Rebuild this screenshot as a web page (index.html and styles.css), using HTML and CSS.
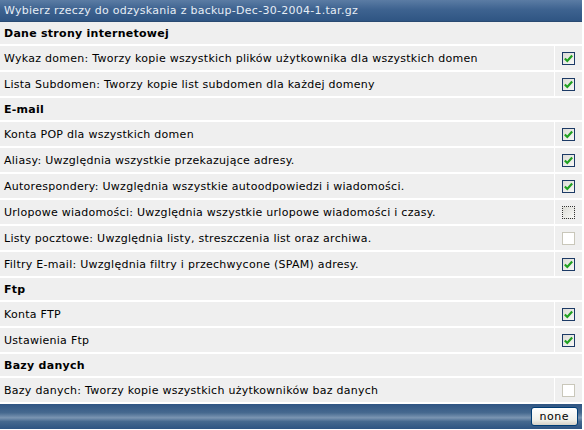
FILE: index.html
```html
<!DOCTYPE html>
<html lang="pl">
<head>
    <meta charset="utf-8">
    <title>Odzyskiwanie kopii</title>
    <link rel="stylesheet" href="styles.css">
</head>
<body>
    <table class="list">
        <tr>
            <td class="title" colspan="2">Wybierz rzeczy do odzyskania z backup-Dec-30-2004-1.tar.gz</td>
        </tr>
        <tr>
            <td class="section" colspan="2">Dane strony internetowej</td>
        </tr>
        <tr>
            <td class="item">Wykaz domen: Tworzy kopie wszystkich plików użytkownika dla wszystkich domen</td>
            <td class="check"><span class="box on"><svg viewBox="0 0 9 9"><path d="M1.5 4.5 L3.5 6.5 L7.5 2" /></svg></span></td>
        </tr>
        <tr>
            <td class="item">Lista Subdomen: Tworzy kopie list subdomen dla każdej domeny</td>
            <td class="check"><span class="box on"><svg viewBox="0 0 9 9"><path d="M1.5 4.5 L3.5 6.5 L7.5 2" /></svg></span></td>
        </tr>
        <tr>
            <td class="section" colspan="2">E-mail</td>
        </tr>
        <tr>
            <td class="item">Konta POP dla wszystkich domen</td>
            <td class="check"><span class="box on"><svg viewBox="0 0 9 9"><path d="M1.5 4.5 L3.5 6.5 L7.5 2" /></svg></span></td>
        </tr>
        <tr>
            <td class="item">Aliasy: Uwzględnia wszystkie przekazujące adresy.</td>
            <td class="check"><span class="box on"><svg viewBox="0 0 9 9"><path d="M1.5 4.5 L3.5 6.5 L7.5 2" /></svg></span></td>
        </tr>
        <tr>
            <td class="item">Autorespondery: Uwzględnia wszystkie autoodpowiedzi i wiadomości.</td>
            <td class="check"><span class="box on"><svg viewBox="0 0 9 9"><path d="M1.5 4.5 L3.5 6.5 L7.5 2" /></svg></span></td>
        </tr>
        <tr>
            <td class="item">Urlopowe wiadomości: Uwzględnia wszystkie urlopowe wiadomości i czasy.</td>
            <td class="check"><span class="box focus"></span></td>
        </tr>
        <tr>
            <td class="item">Listy pocztowe: Uwzględnia listy, streszczenia list oraz archiwa.</td>
            <td class="check"><span class="box off"></span></td>
        </tr>
        <tr>
            <td class="item">Filtry E-mail: Uwzględnia filtry i przechwycone (SPAM) adresy.</td>
            <td class="check"><span class="box on"><svg viewBox="0 0 9 9"><path d="M1.5 4.5 L3.5 6.5 L7.5 2" /></svg></span></td>
        </tr>
        <tr>
            <td class="section" colspan="2">Ftp</td>
        </tr>
        <tr>
            <td class="item">Konta FTP</td>
            <td class="check"><span class="box on"><svg viewBox="0 0 9 9"><path d="M1.5 4.5 L3.5 6.5 L7.5 2" /></svg></span></td>
        </tr>
        <tr>
            <td class="item">Ustawienia Ftp</td>
            <td class="check"><span class="box on"><svg viewBox="0 0 9 9"><path d="M1.5 4.5 L3.5 6.5 L7.5 2" /></svg></span></td>
        </tr>
        <tr>
            <td class="section" colspan="2">Bazy danych</td>
        </tr>
        <tr>
            <td class="item">Bazy danych: Tworzy kopie wszystkich użytkowników baz danych</td>
            <td class="check"><span class="box off"></span></td>
        </tr>
        <tr>
            <td class="footer" colspan="2"><button class="btn">none</button></td>
        </tr>
    </table>
</body>
</html>
```

FILE: styles.css
```css
body {
    margin: 0;
    padding: 0;
    background: #ffffff;
    font-family: "DejaVu Sans", Verdana, sans-serif;
    font-size: 11px;
    color: #000000;
}
.list {
    width: 582px;
    border-collapse: separate;
    border-spacing: 0;
    background: #ffffff;
}
.list td {
    padding: 0 4px;
    background: #efefef;
    border-bottom: 2px solid #ffffff;
    letter-spacing: 0.27px;
}
.title {
    height: 21px;
    color: #e6edf5;
    letter-spacing: 0.3px;
    background: linear-gradient(to bottom, #5b7ca4 0%, #3e6390 45%, #2f5583 100%) !important;
    border-bottom: 1px solid #2a4a72 !important;
}
.section {
    height: 22px;
    font-weight: bold;
}
.item {
    height: 24px;
}
.list td.check {
    width: 20px;
    padding: 0 0 0 7px;
    border-left: 1px solid #ffffff;
}
.box {
    display: block;
    width: 11px;
    height: 11px;
    border: 1px solid #1c3a66;
    background: linear-gradient(135deg, #dcdcd6 0%, #f8f8f6 100%);
}
.box svg {
    display: block;
    width: 11px;
    height: 11px;
    fill: none;
    stroke: #21a121;
    stroke-width: 1.8;
}
.box.focus {
    border: 1px dotted #333333;
}
.box.off {
    border-color: #c9c7ba;
    background: #ffffff;
}
.list td.footer {
    height: 25px;
    padding: 0 4px 0 0;
    text-align: right;
    border-bottom: 0;
    background: linear-gradient(to bottom, #2f5583 0%, #46698f 35%, #7b95b2 55%, #46698f 70%, #2e5482 100%);
}
.btn {
    font-family: "DejaVu Sans", Verdana, sans-serif;
    font-size: 11px;
    height: 19px;
    padding: 0 8px;
    border: 1px solid #003c74;
    border-radius: 3px;
    background: linear-gradient(to bottom, #ffffff 0%, #f0f0ea 70%, #d6d0c5 100%);
    color: #000000;
    letter-spacing: 0.5px;
}
```
